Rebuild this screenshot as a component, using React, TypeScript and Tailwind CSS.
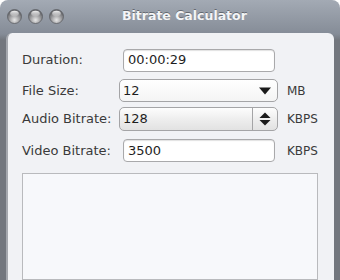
import React from "react";

const font = { fontFamily: '"DejaVu Sans", "Liberation Sans", sans-serif' };

function Light() {
  return (
    <svg width="15" height="15" viewBox="0 0 15 15">
      <defs>
        <radialGradient id="lg" cx="50%" cy="75%" r="60%">
          <stop offset="0%" stopColor="#e8e8e8" />
          <stop offset="55%" stopColor="#a4a4a6" />
          <stop offset="100%" stopColor="#6b6c70" />
        </radialGradient>
        <linearGradient id="hl" x1="0" y1="0" x2="0" y2="1">
          <stop offset="0%" stopColor="#ffffff" stopOpacity="0.9" />
          <stop offset="100%" stopColor="#ffffff" stopOpacity="0.1" />
        </linearGradient>
      </defs>
      <circle cx="7.5" cy="7.5" r="7" fill="url(#lg)" stroke="#5d5f64" strokeWidth="0.8" />
      <ellipse cx="7.5" cy="4.6" rx="4.3" ry="2.8" fill="url(#hl)" />
    </svg>
  );
}

function Label({ children }: { children: React.ReactNode }) {
  return <div className="w-[101px] shrink-0 text-[13px] text-[#3a3a3a]">{children}</div>;
}

function TextBox({ value }: { value: string }) {
  return (
    <div className="w-[152px] h-[23px] rounded-[4px] border border-[#a9a9ab] bg-white shadow-[inset_0_1px_1px_rgba(0,0,0,0.12)] flex items-center pl-[4px] text-[13px] text-[#1e1e1e]">
      {value}
    </div>
  );
}

export default function App() {
  return (
    <div className="w-[340px] h-[280px] bg-white overflow-hidden" style={font}>
      <div className="h-full rounded-t-[8px] bg-[linear-gradient(#a3aab4,#858c97_34px,#73777e_40px)] flex flex-col">
        <div className="h-[33px] shrink-0 flex items-center pl-[7px]">
          <div className="flex gap-[6px]">
            <Light />
            <Light />
            <Light />
          </div>
          <div className="ml-[58px] text-[12.5px] font-bold text-[#f4f5f7] [text-shadow:0_-1px_0_rgba(0,0,0,0.35)]">
            Bitrate Calculator
          </div>
        </div>
        <div className="flex-1 mx-[6px] rounded-t-[6px] bg-[#f1f2f5] border-l-2 border-[#a5a8ae] pl-[14px] pt-[15px] flex flex-col">
          <div className="flex items-center h-[24px]">
            <Label>Duration:</Label>
            <TextBox value="00:00:29" />
          </div>
          <div className="flex items-center h-[23px] mt-[7px]">
            <Label>File Size:</Label>
            <div className="ml-[-4px] w-[159px] h-[23px] rounded-[5px] border border-[#a4a4a6] bg-[linear-gradient(#ffffff,#f4f4f4)] flex items-center pl-[3px] pr-[6px] text-[13px] text-[#1e1e1e]">
              <span className="flex-1">12</span>
              <svg width="12" height="8" viewBox="0 0 12 8">
                <path d="M0 0.5 H12 L6 7.5 Z" fill="#1a1a1a" />
              </svg>
            </div>
            <div className="ml-[9px] text-[12px] text-[#3a3a3a]">MB</div>
          </div>
          <div className="flex items-center h-[24px] mt-[5px]">
            <Label>Audio Bitrate:</Label>
            <div className="ml-[-4px] w-[159px] h-[24px] rounded-[5px] border border-[#a4a4a6] bg-[linear-gradient(#fdfdfd,#eeeeee_50%,#e2e2e2)] flex items-center text-[13px] text-[#1e1e1e]">
              <span className="flex-1 pl-[3px]">128</span>
              <div className="w-[25px] h-full border-l border-[#a4a4a6] flex items-center justify-center">
                <svg width="12" height="14" viewBox="0 0 12 14">
                  <path d="M0.5 6 L6 0.5 L11.5 6 Z" fill="#1a1a1a" />
                  <path d="M0.5 8 L6 13.5 L11.5 8 Z" fill="#1a1a1a" />
                </svg>
              </div>
            </div>
            <div className="ml-[9px] text-[12px] text-[#3a3a3a]">KBPS</div>
          </div>
          <div className="flex items-center h-[23px] mt-[8px]">
            <Label>Video Bitrate:</Label>
            <TextBox value="3500" />
            <div className="ml-[12px] text-[12px] text-[#3a3a3a]">KBPS</div>
          </div>
          <div className="mt-[11px] w-[296px] flex-1 border border-[#b9babd] bg-[#f7f8fb]" />
        </div>
      </div>
    </div>
  );
}
